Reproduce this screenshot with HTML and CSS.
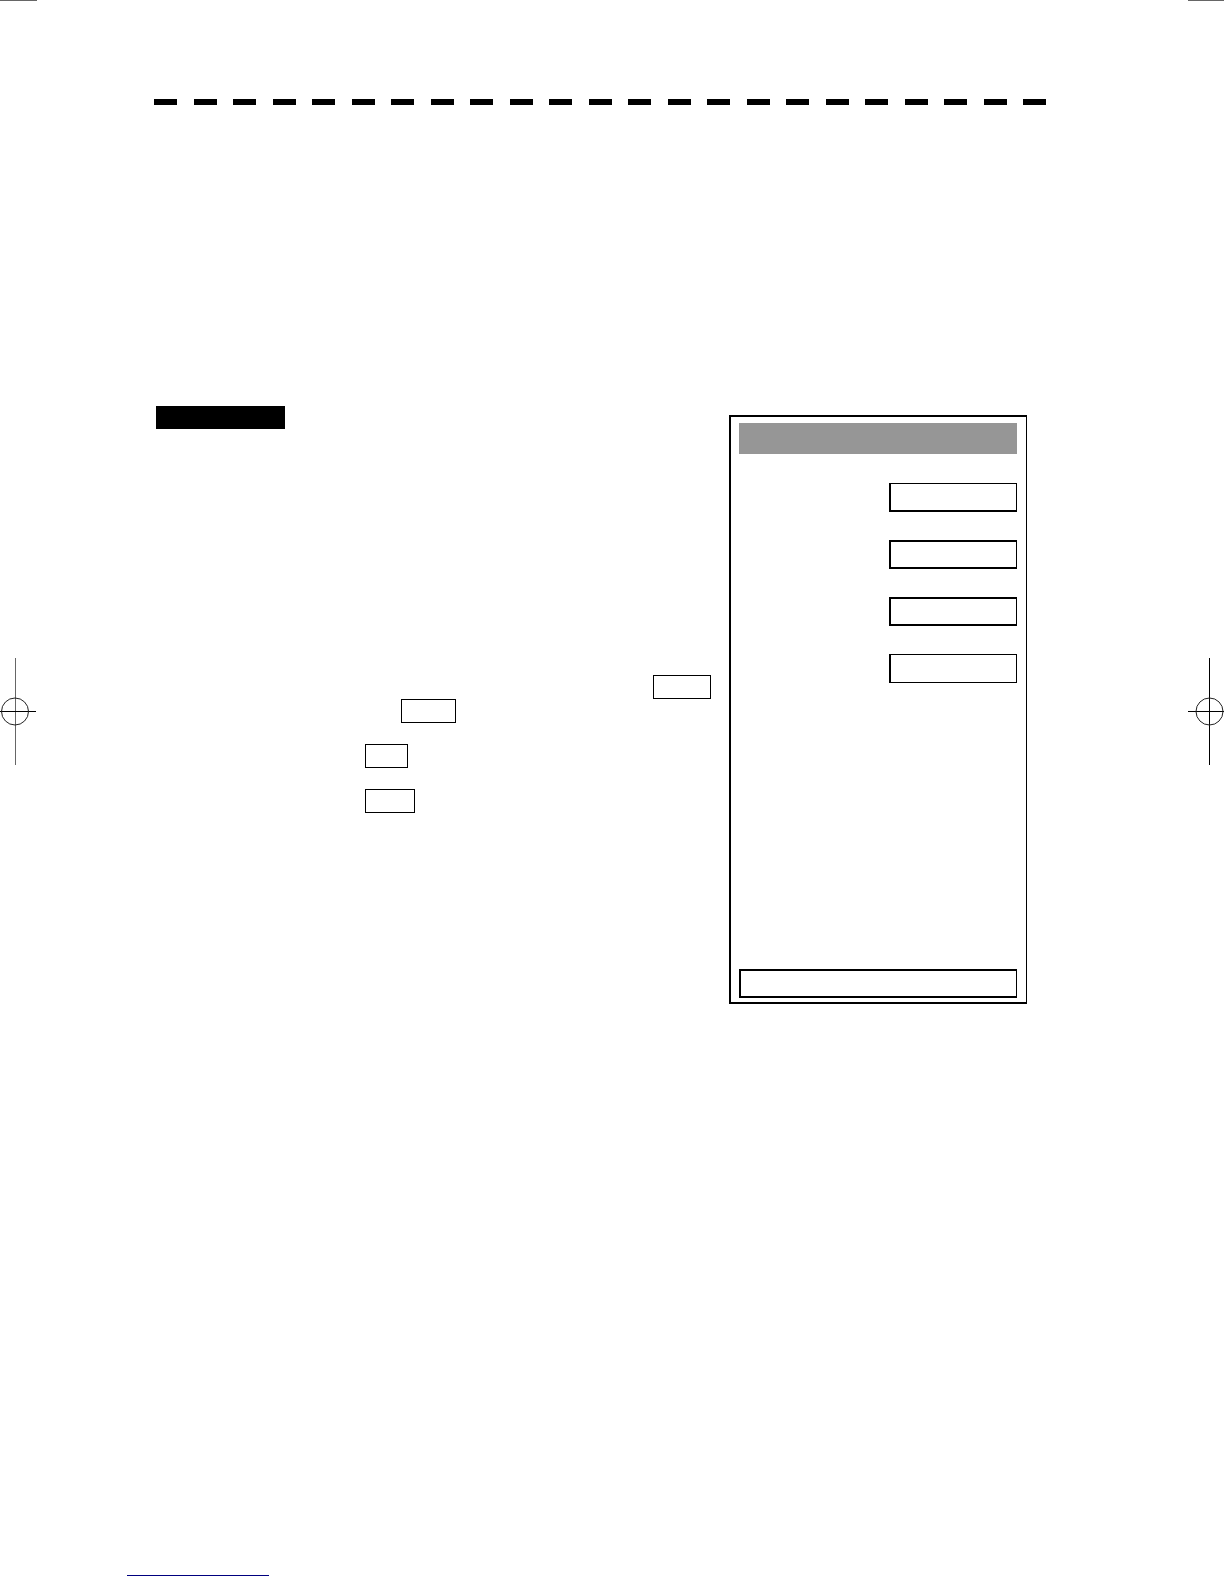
FILE: index.html
```html
<!DOCTYPE html>
<html lang="en">
<head>
<meta charset="utf-8">
<meta name="viewport" content="width=device-width, initial-scale=1">
<title>Manual page</title>
<link rel="stylesheet" href="styles.css">
</head>
<body>
<div class="sheet">
  <div class="margin">
    <div class="trim"></div>
    <svg class="register" width="37" height="107" viewBox="0 0 37 107" aria-hidden="true">
      <path d="M15.500 0V107" stroke="#666"/>
      <path d="M0 53.500H36" stroke="#000"/>
      <circle cx="15" cy="53.500" r="13.500" stroke="#222"/>
    </svg>
  </div>
  <div class="content">
    <div class="rule">
      <i></i><i></i><i></i><i></i><i></i><i></i><i></i><i></i><i></i><i></i><i></i><i></i><i></i><i></i><i></i><i></i><i></i><i></i><i></i><i></i><i></i><i></i><i></i>
    </div>
    <main class="main">
      <section class="text">
        <h1 class="heading"></h1>
        <div class="steps">
          <div class="step step-end"><button class="key key-wide" type="button" aria-label="Key 1"></button></div>
          <div class="step step-inset"><button class="key key-large" type="button" aria-label="Key 2"></button></div>
          <div class="step step-spaced"><button class="key key-small" type="button" aria-label="Key 3"></button></div>
          <div class="step step-spaced"><button class="key key-medium" type="button" aria-label="Key 4"></button></div>
        </div>
      </section>
      <form class="panel">
        <div class="title"></div>
        <div class="fields">
          <input class="field field-thin-top" type="text" aria-label="Value 1">
          <input class="field" type="text" aria-label="Value 2">
          <input class="field" type="text" aria-label="Value 3">
          <input class="field field-thin" type="text" aria-label="Value 4">
        </div>
        <input class="field status" type="text" aria-label="Status">
      </form>
    </main>
    <footer class="footer"><a class="link" href="#" aria-label="Website"></a></footer>
  </div>
  <div class="margin">
    <div class="trim"></div>
    <svg class="register" width="36" height="107" viewBox="0 0 36 107" aria-hidden="true">
      <path d="M21.500 0V107M0 53.500H36" stroke="#000"/>
      <circle cx="21.500" cy="53.500" r="13.500" stroke="#222"/>
    </svg>
  </div>
</div>
</body>
</html>
```
FILE: styles.css
```css
* {
  box-sizing: border-box;
}

body {
  margin: 0;
  background: #fff;
  color: #000;
  font: 16px/24px "Liberation Sans", sans-serif;
}

.sheet {
  display: grid;
  grid-template-columns: 37px minmax(0, 1fr) 36px;
  min-height: 100vh;
}

/* printer's marks in the side margins */
.trim {
  height: 1px;
  background: #666;
}

.register {
  display: block;
  margin-top: 657px;
  fill: none;
}

.content {
  display: flex;
  flex-direction: column;
  padding-top: 99px;
}

.rule {
  display: flex;
  justify-content: space-between;
  margin: 0 142px 0 117px;
}

.rule i {
  width: 23px;
  height: 6px;
  background: #000;
}

.main {
  display: grid;
  grid-template-columns: minmax(0, 1fr) 298px;
  column-gap: 18px;
  align-items: start;
  margin: 301px 161px 0 119px;
}

.heading {
  width: 129px;
  height: 23px;
  margin: 0;
  background: #000;
}

.steps {
  margin-top: 246px;
  padding-left: 209px;
}

.step {
  display: flex;
}

.step-end {
  justify-content: flex-end;
}

.step-inset {
  padding-left: 36px;
}

.step-spaced {
  margin-top: 21px;
}

.key {
  height: 24px;
  padding: 0;
  border: 1px solid #000;
  border-radius: 0;
  background: #fff;
}

.key-wide { width: 58px; }
.key-large { width: 55px; }
.key-medium { width: 50px; }
.key-small { width: 43px; }

.panel {
  display: flex;
  flex-direction: column;
  min-height: 589px;
  margin-top: 9px;
  padding: 6px 9px 4px 8px;
  border: 2px solid #000;
  border-right-width: 1px;
}

.title {
  height: 31px;
  background: #969696;
}

.fields {
  display: flex;
  flex-direction: column;
  align-items: flex-end;
  gap: 28px;
  margin-top: 29px;
}

.field {
  width: 128px;
  height: 29px;
  padding: 0 6px;
  border: 2px solid #000;
  border-right-width: 1px;
  border-radius: 0;
  background: #fff;
  font: inherit;
}

.field-thin-top {
  border-top-width: 1px;
}

.field-thin {
  border-width: 1px 1px 1px 2px;
}

.status {
  width: 100%;
  margin-top: auto;
}

.footer {
  margin-top: auto;
  padding: 48px 0 8px 90px;
}

.link {
  display: block;
  width: 142px;
  height: 20px;
  border-bottom: 1px solid #00007f;
}
```
